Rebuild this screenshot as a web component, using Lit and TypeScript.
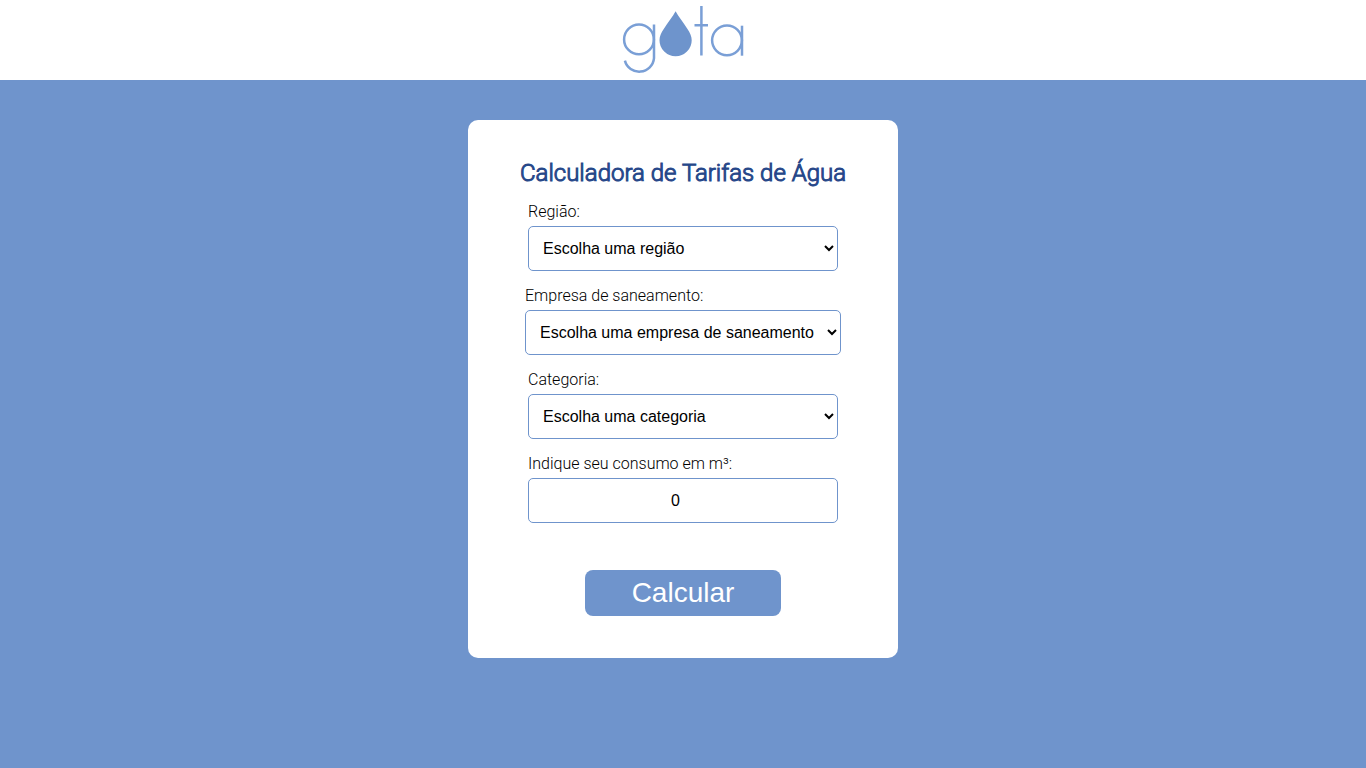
import { LitElement, html, css } from "lit";
import { customElement, state } from "lit/decorators.js";

@customElement("gota-logo")
class GotaLogo extends LitElement {
  static styles = css`
    :host {
      display: block;
    }
    .logo {
      display: block;
      width: 122px;
      height: 80px;
    }
    .line {
      fill: none;
      stroke: #7a9fd6;
      stroke-width: 2.5;
    }
    .drop {
      fill: #6e94cc;
    }
  `;

  render() {
    return html`
      <svg class="logo" viewBox="622 0 122 80" role="img" aria-label="gota">
        <g class="line">
          <circle cx="639" cy="39.4" r="14.9" />
          <path d="M654 24.5V58.2A14.8 14.6 0 0 1 624.9 60.6" />
          <path d="M701.4 6V55.5M694.5 25.3H708" />
          <circle cx="727" cy="40.3" r="14.9" />
          <path d="M742 25.7V55.7" />
        </g>
        <path
          class="drop"
          d="M675.6 11.3C678.5 16.6 683.6 23 687.3 28.8C690.2 33.2 691.7 36.4 691.7 40.2A16.1 16 0 0 1 659.5 40.2C659.5 36.4 661 33.2 663.9 28.8C667.6 23 672.7 16.6 675.6 11.3Z"
        />
      </svg>
    `;
  }
}

@customElement("app-root")
class AppRoot extends LitElement {
  static styles = css`
    :host {
      display: flex;
      flex-direction: column;
      min-height: 100vh;
      background: #6f94cc;
      color: #000;
      font: 300 16px/19px Roboto, sans-serif;
    }
    .header {
      display: flex;
      justify-content: center;
      background: #fff;
    }
    .main {
      display: flex;
      justify-content: center;
      padding: 40px 16px;
    }
    .card {
      box-sizing: border-box;
      display: flex;
      flex-direction: column;
      align-items: center;
      width: 100%;
      max-width: 430px;
      padding: 38px 16px 42px;
      border-radius: 10px;
      background: #fff;
    }
    .title {
      margin: 0 0 14px;
      color: #264789;
      font-size: 24px;
      font-weight: 300;
      line-height: 30px;
      -webkit-text-stroke: 1px #264789;
    }
    .fields {
      display: flex;
      flex-direction: column;
      align-items: center;
      gap: 15px;
    }
    .field {
      display: flex;
      flex-direction: column;
      gap: 5px;
    }
    .control {
      box-sizing: border-box;
      min-width: 310px;
      height: 45px;
      margin: 0;
      padding: 10px;
      border: 1px solid #6f94cc;
      border-radius: 5px;
      background: #fff;
      color: #000;
      font: 400 16px "Liberation Sans", Arial, sans-serif;
    }
    .number {
      text-align: center;
      appearance: textfield;
    }
    .submit {
      width: 196px;
      height: 46px;
      margin-top: 47px;
      padding: 0;
      border: 0;
      border-radius: 8px;
      background: #6f94cc;
      color: #fff;
      font: 400 28px "Liberation Sans", Arial, sans-serif;
      cursor: pointer;
    }
  `;

  @state() private consumo = "0";

  private onConsumo(e: Event) {
    this.consumo = (e.target as HTMLInputElement).value;
  }

  render() {
    return html`
      <header class="header"><gota-logo></gota-logo></header>
      <main class="main">
        <form class="card" @submit=${(e: Event) => e.preventDefault()}>
          <h1 class="title">Calculadora de Tarifas de Água</h1>
          <div class="fields">
            <div class="field">
              <label for="regiao">Região:</label>
              <select class="control" id="regiao">
                <option>Escolha uma região</option>
              </select>
            </div>
            <div class="field">
              <label for="empresa">Empresa de saneamento:</label>
              <select class="control" id="empresa">
                <option>Escolha uma empresa de saneamento</option>
              </select>
            </div>
            <div class="field">
              <label for="categoria">Categoria:</label>
              <select class="control" id="categoria">
                <option>Escolha uma categoria</option>
              </select>
            </div>
            <div class="field">
              <label for="consumo">Indique seu consumo em m³:</label>
              <input
                class="control number"
                id="consumo"
                type="number"
                min="0"
                .value=${this.consumo}
                @input=${this.onConsumo}
              />
            </div>
          </div>
          <button class="submit" type="submit">Calcular</button>
        </form>
      </main>
    `;
  }
}
